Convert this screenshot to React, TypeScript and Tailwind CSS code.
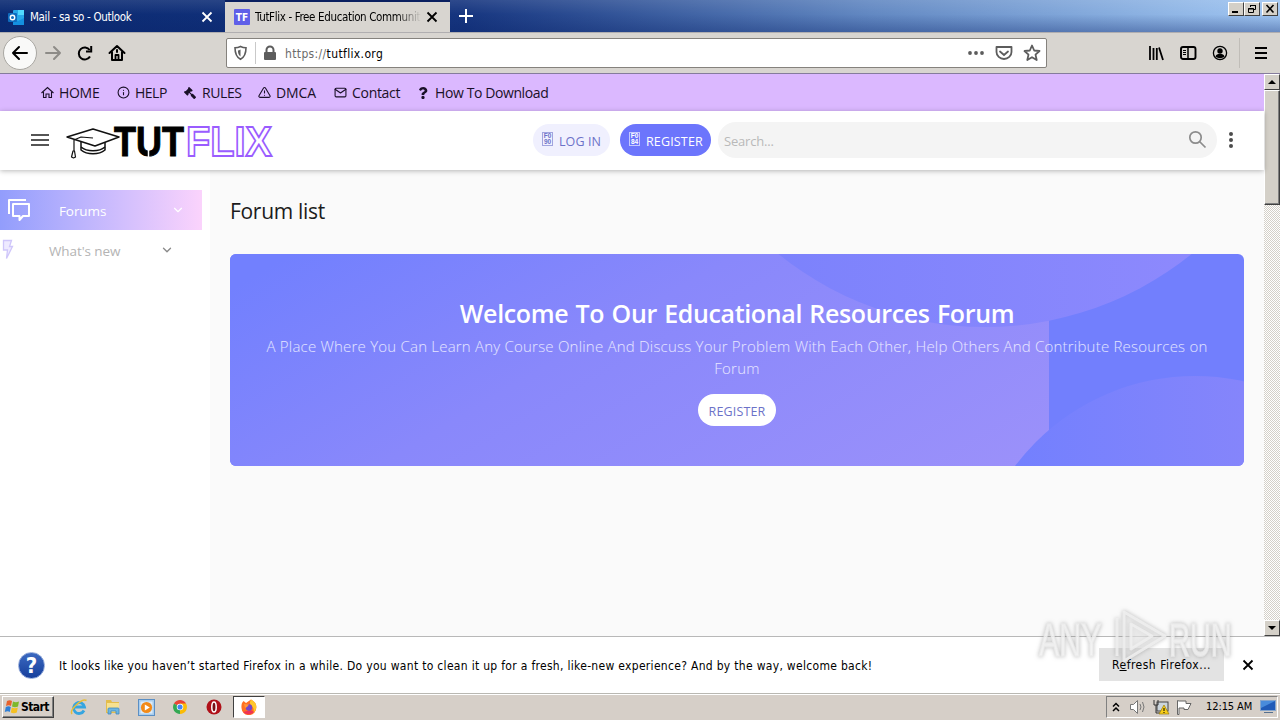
import React from 'react';
import {
  FiAlertTriangle,
  FiChevronDown,
  FiHome,
  FiInfo,
  FiMail,
} from 'react-icons/fi';
import { FaGavel, FaQuestion } from 'react-icons/fa';

interface NavItem {
  label: string;
  icon: React.ReactNode;
  className: string;
  textClassName: string;
}

const HomeIcon = () => (
  <svg width="13" height="13" fill="none" stroke="currentColor" strokeWidth="1.100">
    <path d="M.5 7L6.500 1.500 12.500 7M2.500 6v5.500h2.500V8h3v3.500h2.500V6" />
  </svg>
);

const NAV_ITEMS: NavItem[] = [
  { label: 'HOME', icon: <HomeIcon />, className: 'w-[76px]', textClassName: 'tracking-[-0.3px]' },
  { label: 'HELP', icon: <FiInfo size={13} />, className: 'w-[67px]', textClassName: 'tracking-[-0.5px]' },
  { label: 'RULES', icon: <FaGavel size={12} className="-scale-x-100" />, className: 'w-[74px]', textClassName: 'tracking-[-0.4px]' },
  { label: 'DMCA', icon: <FiAlertTriangle size={13} />, className: 'w-[76px]', textClassName: 'tracking-[-0.1px]' },
  { label: 'Contact', icon: <FiMail size={13} />, className: 'w-[83px]', textClassName: 'tracking-[-0.3px]' },
  { label: 'How To Download', icon: <FaQuestion size={12} />, className: 'w-[140px]', textClassName: 'tracking-[-0.4px]' },
];

/* ---------- Browser chrome ---------- */

const CloseX: React.FC<{ className?: string }> = ({ className = '' }) => (
  <svg className={className} width="12" height="12" viewBox="0 0 12 12" fill="none" stroke="currentColor" strokeWidth="1.8">
    <path d="M1.5 1.5l9 9M10.5 1.5l-9 9" />
  </svg>
);

const OutlookIcon = () => (
  <svg width="17" height="17" viewBox="0 0 17 17" className="shrink-0">
    <rect x="5" y="1" width="11" height="15" rx="1" fill="#28a8ea" />
    <rect x="10" y="1" width="6" height="5" fill="#50d9ff" />
    <path d="M5 9l5 3 6-3v7H5z" fill="#1490df" />
    <rect x="0" y="4" width="9" height="9" rx="1" fill="#0f6cbd" />
    <circle cx="4.5" cy="8.5" r="2.2" fill="none" stroke="#fff" strokeWidth="1.4" />
  </svg>
);

const WindowButton: React.FC<{ children: React.ReactNode; className?: string }> = ({ children, className = '' }) => (
  <div
    className={`flex w-4 items-center justify-center border border-t-white border-l-white border-r-[#404040] border-b-[#404040] bg-[#d4d0c8] ${className}`}
  >
    {children}
  </div>
);

const TabBar = () => (
  <div className="flex h-8 shrink-0 bg-[linear-gradient(180deg,rgba(255,255,255,0.1),rgba(0,0,0,0)_45%,rgba(10,36,106,0.36)),linear-gradient(90deg,#0a2a72_0%,#16357f_36%,#6288c2_68%,#a0c6f2_100%)]">
    <div className="flex w-[225px] items-center pt-[2px] pl-2 text-white">
      <OutlookIcon />
      <span className="mt-px ml-[5px] w-[171px] whitespace-nowrap text-[11.5px] tracking-[-0.33px]">Mail - sa so - Outlook</span>
      <CloseX />
    </div>
    <div className="flex w-[225px] items-center border-t-2 border-[#0a2060] bg-[#d8d5d0] pl-[9px] text-black">
      <div className="flex size-4 shrink-0 items-center justify-center rounded-[1px] bg-[#5f5fe8] text-[10px] font-bold text-white">TF</div>
      <div className="mt-px ml-[5px] w-[166px] overflow-hidden whitespace-nowrap bg-gradient-to-r from-black from-85% to-transparent bg-clip-text text-[11.5px] tracking-[-0.36px] text-transparent">
        TutFlix - Free Education Community
      </div>
      <CloseX className="ml-[5px]" />
    </div>
    <svg className="mt-[9px] ml-[9px]" width="14" height="14" stroke="#fff" strokeWidth="2">
      <path d="M7 0v14M0 7h14" />
    </svg>
    <div className="mt-[2px] mr-[2px] ml-auto flex">
      <WindowButton className="h-[14px]">
        <svg width="10" height="10"><path d="M1 7h6v2H1z" /></svg>
      </WindowButton>
      <WindowButton className="h-[14px]">
        <svg width="10" height="10" fill="none" stroke="#000">
          <path d="M3.5 3V1.5h5v4H7M3 1.5h6M1.500 4.500h5v4h-5zM1 5h6" />
        </svg>
      </WindowButton>
      <WindowButton className="ml-[2px] h-[14px]">
        <svg width="10" height="10" stroke="#000" strokeWidth="1.6"><path d="M1.500 1l7 7.500M8.500 1l-7 7.500" /></svg>
      </WindowButton>
    </div>
  </div>
);

const Toolbar = () => (
  <div className="flex h-[42px] shrink-0 items-center border-t border-b border-t-[#b0aeb0] border-b-[#857c9c] bg-[#d8d5d0] pl-[3px]">
    <div className="flex size-[34px] items-center justify-center rounded-full border border-[#a9a7a2] bg-[#f9f9f8]">
      <svg width="18" height="16" fill="none" stroke="#000" strokeWidth="2" strokeLinecap="round" strokeLinejoin="round">
        <path d="M2 8h14M8 2L2 8l6 6" />
      </svg>
    </div>
    <svg className="ml-[7px]" width="18" height="16" fill="none" stroke="#8d8b87" strokeWidth="2" strokeLinecap="round" strokeLinejoin="round">
      <path d="M2 8h14M10 2l6 6-6 6" />
    </svg>
    <svg className="ml-[14px]" width="18" height="18" fill="none" stroke="#000" strokeWidth="2">
      <path d="M14 12.500a6 6 0 1 1-.3-6.500" />
      <path d="M15.200 2v5.500H10" />
    </svg>
    <svg className="ml-[14px]" width="18" height="18" fill="none" stroke="#000" strokeWidth="2" strokeLinejoin="round" strokeLinecap="round">
      <path d="M1.500 9L9 2l7.500 7M4 8v8h10V8" />
      <path d="M7.500 16v-5h3v5" strokeWidth="1.800" />
      <path d="M9 6v2" />
    </svg>
    <div className="ml-[100px] flex h-[30px] w-[821px] items-center rounded-[2px] border border-[#85827d] bg-white">
      <svg className="ml-[6px]" width="15" height="16" fill="none" stroke="#5c5c5c" strokeWidth="1.600">
        <path d="M7.500 1.500c2 1 3.700 1.300 5.500 1.300 0 5.500-1 9.200-5.500 11.500C3 12 2 8.300 2 2.800c1.800 0 3.500-.3 5.500-1.300z" />
        <path d="M7.500 4.500v7c-2-1.500-2.500-3.500-2.600-6 .9-.2 1.700-.4 2.600-1z" fill="#5c5c5c" stroke="none" />
      </svg>
      <div className="ml-[7px] h-[22px] w-px bg-[#c9c9c9]" />
      <svg className="ml-[7px]" width="14" height="16" fill="#5c5c5c">
        <rect x="1" y="7" width="12" height="8" rx="1" />
        <path d="M3.500 7V5a3.500 3.500 0 0 1 7 0v2" fill="none" stroke="#5c5c5c" strokeWidth="2" />
      </svg>
      <span className="mt-[2px] ml-2 w-[682px] whitespace-nowrap text-[12px] tracking-[0.36px] text-[#6b6b6b]">
        https://<span className="text-black">tutflix.org</span>
      </span>
      <svg className="shrink-0" width="18" height="16" fill="#5c5c5c">
        <circle cx="3" cy="8" r="1.900" /><circle cx="9" cy="8" r="1.900" /><circle cx="15" cy="8" r="1.900" />
      </svg>
      <svg className="ml-[10px] shrink-0" width="18" height="16" fill="none" stroke="#5c5c5c" strokeWidth="1.800">
        <path d="M1.500 2h15v5a7.500 7 0 0 1-15 0z" strokeLinejoin="round" />
        <path d="M5 6.500L9 10l4-3.500" strokeLinecap="round" />
      </svg>
      <svg className="ml-[10px] shrink-0" width="18" height="18" fill="none" stroke="#5c5c5c" strokeWidth="1.800" strokeLinejoin="round">
        <path d="M9 1.500l2.200 5 5.300.5-4 3.600 1.200 5.400L9 13.200 4.300 16l1.200-5.400-4-3.600 5.300-.5z" />
      </svg>
    </div>
    <div className="ml-auto flex items-center">
      <svg width="17" height="16" stroke="#000" strokeWidth="1.800">
        <path d="M2 1v14M5.500 3v12M8.800 3v12M11 2.500l4 12.500" />
      </svg>
      <svg className="ml-[15px]" width="17" height="16" fill="none" stroke="#000" strokeWidth="1.900">
        <rect x="1" y="2" width="14.500" height="12" rx="2" />
        <path d="M8 2v12" strokeWidth="1.500" />
        <path d="M3 5.500h3M3 7.500h3M3 9.500h3" strokeWidth="1" />
      </svg>
      <svg className="ml-[15px]" width="16" height="16">
        <circle cx="8" cy="8" r="6.600" fill="none" stroke="#000" strokeWidth="1.300" />
        <circle cx="8" cy="6" r="2.700" />
        <path d="M3.500 11.500c.5-2 2-2.500 4.500-2.500s4 .5 4.500 2.500c-2.500 2.200-6.500 2.200-9 0z" />
      </svg>
      <div className="ml-[11px] h-[30px] w-px bg-[#c0bdb8]" />
      <svg className="mr-[13px] ml-[15px]" width="12" height="14" stroke="#000" strokeWidth="2">
        <path d="M0 2h12M0 7h12M0 12h12" />
      </svg>
    </div>
  </div>
);

/* ---------- Page header ---------- */

const TopNav = () => (
  <nav className="flex h-[37px] shrink-0 items-center bg-[#dbb8ff] pl-[41px] text-[14px] text-[#1a1028]">
    {NAV_ITEMS.map((item) => (
      <a key={item.label} className={`flex items-center whitespace-nowrap ${item.className}`}>
        <span className="w-[18px]">{item.icon}</span>
        <span className={item.textClassName}>{item.label}</span>
      </a>
    ))}
  </nav>
);

const Logo = () => (
  <svg width="208" height="40" viewBox="0 0 208 40" className="ml-[17px] shrink-0 overflow-visible">
    <g fill="#fff" stroke="#111" strokeWidth="1.500" strokeLinejoin="round">
      <path d="M15 18v12c6 5 18 5 24 0V18" />
      <path d="M15 27c6 5 18 5 24 0" fill="none" />
      <path d="M1 17L27 9l26 8-24 9z" />
      <path d="M27 18l-12-1-7 3v12" fill="none" strokeWidth="1.200" />
      <path d="M7 31l-1.500 6 2 1 2-1L8.500 31z" strokeWidth="1.200" />
    </g>
    <text x="48" y="35.500" textLength="70" lengthAdjust="spacingAndGlyphs" fontFamily="Liberation Sans" fontWeight="700" fontSize="43" fill="#000" stroke="#000" strokeWidth="1">TUT</text>
    <path d="M82.500 27v11" stroke="#fff" strokeWidth="1.500" />
    <text x="120" y="35.500" textLength="86" lengthAdjust="spacingAndGlyphs" fontFamily="Liberation Sans" fontWeight="700" fontSize="43" fill="#fff" stroke="#9a5cff" strokeWidth="1.800">FLIX</text>
  </svg>
);

// Missing-font box showing the code point of the glyph
const CodeBox: React.FC<{ low: string }> = ({ low }) => (
  <span className="-mt-[2px] flex h-[14px] w-[11px] shrink-0 flex-col items-center justify-center border border-current/60 font-['Liberation_Sans'] text-[6.500px] leading-[6px] font-bold">
    <span>F0</span>
    <span>{low}</span>
  </span>
);

const SiteHeader = () => (
  <header className="relative flex h-[59px] shrink-0 items-center bg-white pb-[2px] pl-[31px] shadow-[0_1px_5px_rgba(0,0,0,0.28)]">
    <svg width="18" height="14" stroke="#555" strokeWidth="2" className="shrink-0">
      <path d="M0 2h18M0 7h18M0 12h18" />
    </svg>
    <Logo />
    <a className="ml-[259px] flex h-8 w-[77px] items-center rounded-full bg-[#f0f0fe] pl-[9px] text-[12.5px] whitespace-nowrap text-[#6c72c8]">
      <CodeBox low="90" />
      <span className="mt-[5px] ml-[6px] tracking-[0.1px]">LOG IN</span>
    </a>
    <a className="ml-[10px] flex h-8 w-[91px] items-center rounded-full bg-[#6c75fc] pl-[9px] text-[12.5px] whitespace-nowrap text-white">
      <CodeBox low="84" />
      <span className="mt-[5px] ml-[6px] tracking-[0.15px]">REGISTER</span>
    </a>
    <div className="ml-[7px] flex h-9 w-[499px] items-center rounded-full bg-[#f4f4f4] pr-[10px] pl-[6px]">
      <span className="mt-[5px] text-[13px] tracking-[-0.2px] text-[#b9b9b9]">Search...</span>
      <svg className="ml-auto" width="19" height="19" fill="none" stroke="#8c8c8c" strokeWidth="1.700">
        <circle cx="7.500" cy="7.500" r="5.700" />
        <path d="M11.500 11.500l6 6" />
      </svg>
    </div>
    <svg className="ml-[11px]" width="6" height="18" fill="#4c4c4c">
      <circle cx="3" cy="3" r="2" /><circle cx="3" cy="9" r="2" /><circle cx="3" cy="15" r="2" />
    </svg>
  </header>
);

/* ---------- Page body ---------- */

const Sidebar = () => (
  <aside className="w-[210px] shrink-0 bg-white pt-5 text-[13.500px]">
    <div className="flex h-10 w-[202px] items-center bg-gradient-to-r from-[#929dfc] to-[#fbd3fc] pl-2 text-white">
      <svg width="23" height="23" fill="none" stroke="#fff" strokeWidth="2" strokeLinejoin="round">
        <path d="M1 15V1h17" />
        <path d="M5 5h16v12h-6l-3.500 4v-4H5z" />
      </svg>
      <span className="mt-[2px] ml-7 w-[112px] tracking-[-0.1px]">Forums</span>
      <FiChevronDown size={14} strokeWidth={2} />
    </div>
    <div className="flex h-10 w-[202px] items-center pl-[2px] text-[#b4b4b4]">
      <svg width="12" height="22" fill="#eeeaff" stroke="#cfc6fa" strokeWidth="1.300">
        <path d="M1.500 1.500h8l-2 6h3l-6 12 1-8.500h-4z" />
      </svg>
      <span className="mt-[2px] ml-[35px] w-[111px] tracking-[-0.1px]">What&apos;s new</span>
      <FiChevronDown size={14} strokeWidth={2.300} className="text-[#8a8a8a]" />
    </div>
  </aside>
);

const BannerShapes = () => (
  <svg className="absolute inset-0" width="1014" height="212" viewBox="0 0 1014 212">
    <defs>
      <linearGradient id="panel" gradientUnits="userSpaceOnUse" x1="60" y1="0" x2="390" y2="560">
        <stop offset="0" stopColor="#7280fe" />
        <stop offset="0.35" stopColor="#8988fb" />
        <stop offset="1" stopColor="#a093fa" />
      </linearGradient>
      <linearGradient id="topCircle" gradientUnits="userSpaceOnUse" x1="548" y1="0" x2="962" y2="0">
        <stop offset="0" stopColor="#7c82fc" />
        <stop offset="1" stopColor="#8d89fd" />
      </linearGradient>
      <linearGradient id="bottomCircle" gradientUnits="userSpaceOnUse" x1="785" y1="0" x2="1014" y2="0">
        <stop offset="0" stopColor="#7380fe" />
        <stop offset="1" stopColor="#8585fb" />
      </linearGradient>
    </defs>
    <rect width="1014" height="212" fill="#727ffd" />
    <rect width="819" height="212" fill="url(#panel)" />
    <circle cx="755" cy="-256" r="329" fill="url(#topCircle)" />
    <circle cx="965" cy="347" r="225" fill="url(#bottomCircle)" />
  </svg>
);

const WelcomeBanner = () => (
  <section className="relative h-[212px] w-[1014px] overflow-hidden rounded-md text-center text-white">
    <BannerShapes />
    <div className="relative flex flex-col items-center pt-[41px]">
      <h2 className="text-[25px] leading-9 font-semibold tracking-[-0.36px] whitespace-nowrap [word-spacing:1.2px]">Welcome To Our Educational Resources Forum</h2>
      <p className="mt-[4px] text-[15px] leading-[22px] font-light tracking-[0.21px] whitespace-nowrap text-white/80">
        A Place Where You Can Learn Any Course Online And Discuss Your Problem With Each Other, Help Others And Contribute Resources on
        <br />
        Forum
      </p>
      <a className="mt-[15px] flex h-8 w-[78px] items-center justify-center rounded-full bg-white pt-[4px] text-[12.5px] tracking-[0.15px] text-[#6c72c8]">
        REGISTER
      </a>
    </div>
  </section>
);

const Scrollbar = () => (
  <div className="flex w-4 shrink-0 flex-col bg-[repeating-conic-gradient(#fff_0_25%,#d4d0c8_0_50%)] bg-[length:2px_2px]">
    <WindowButton className="h-4">
      <svg width="8" height="4"><path d="M4 0l4 4H0z" /></svg>
    </WindowButton>
    <div className="h-[115px] border border-t-white border-l-white border-r-[#404040] border-b-[#404040] bg-[#d4d0c8] shadow-[inset_-1px_-1px_0_#808080]" />
    <WindowButton className="mt-auto h-4">
      <svg width="8" height="4"><path d="M4 4l4-4H0z" /></svg>
    </WindowButton>
  </div>
);

/* ---------- Notification + taskbar ---------- */

const Notification = () => (
  <div className="flex h-[57px] shrink-0 items-center border-t border-[#b8b8b8] bg-white pl-[18px] text-black">
    <div className="flex size-[27px] shrink-0 items-center justify-center rounded-full border border-[#8ea6d8] bg-gradient-to-b from-[#3c69c0] to-[#173f9c] text-[22px] font-bold text-white">?</div>
    <span className="mt-px ml-[14px] w-[1040px] text-[12px] tracking-[0.305px] whitespace-nowrap">
      It looks like you haven’t started Firefox in a while. Do you want to clean it up for a fresh, like-new experience? And by the way, welcome back!
    </span>
    <div className="-mt-px flex h-[33px] w-[125px] shrink-0 items-center justify-center bg-[#e3e3e3] text-[12px] tracking-[0.5px] whitespace-nowrap">
      <span>R<u>e</u>fresh Firefox...</span>
    </div>
    <CloseX className="ml-[18px] shrink-0" />
  </div>
);

const StartFlag = () => (
  <svg width="16" height="16" viewBox="0 0 16 16">
    <path d="M3 2c2-1 3.500-1 5 0L7 7C5.500 6 4 6 2 7z" fill="#e8622c" />
    <path d="M9 2.500c2 1 3.500 1 6 0L14 7.500c-2 1-4 1-6 0z" fill="#7db82c" />
    <path d="M1.800 8c2-1 3.500-1 5 0l-1 5C4.500 12 3 12 .8 13z" fill="#2f7fd6" />
    <path d="M7.800 8.500c2 1 4 1 6 0l-1 5c-2 1-4 1-6 0z" fill="#f5c022" />
  </svg>
);

const IeIcon = () => (
  <svg width="18" height="18" viewBox="0 0 18 18" fill="none">
    <path d="M14 12.500A5.500 5.500 0 1 1 14.500 9H5" stroke="#35a5e0" strokeWidth="2.800" />
    <path d="M2 16C-1 12 12 0 16.500 2.500" stroke="#e8bd38" strokeWidth="1.500" />
  </svg>
);

const ExplorerIcon = () => (
  <svg width="18" height="18" viewBox="0 0 18 18">
    <path d="M2 2h5l1 2h7v11H2z" fill="#e3bd4c" />
    <path d="M3 5h12v9H3z" fill="#f6e190" />
    <path d="M4 16v-5q0-1 1-1h9q1 0 1 1v5h-3v-3H7v3z" fill="#6cb6e2" stroke="#4189bd" strokeWidth="0.800" />
  </svg>
);

const MediaIcon = () => (
  <svg width="17" height="17" viewBox="0 0 17 17">
    <rect x="0.500" y="0.500" width="16" height="16" fill="#a8cdee" stroke="#5b8fc4" />
    <rect x="2.500" y="2.500" width="12" height="12" fill="#dcebf8" />
    <circle cx="8.500" cy="8.500" r="5.600" fill="#f28a18" />
    <path d="M6.800 5.500l5 3-5 3z" fill="#fff" />
  </svg>
);

const ChromeIcon = () => (
  <svg width="14" height="14" viewBox="0 0 16 16">
    <path d="M8 8L1.100 4A8 8 0 0 1 14.900 4z" fill="#ea4335" />
    <path d="M8 4h6.900A8 8 0 0 1 8 16z" fill="#fbbc05" />
    <path d="M8 8v8A8 8 0 0 1 1.100 4z" fill="#34a853" />
    <circle cx="8" cy="8" r="3.700" fill="#fff" />
    <circle cx="8" cy="8" r="2.900" fill="#4285f4" />
  </svg>
);

const OperaIcon = () => (
  <svg width="16" height="16" viewBox="0 0 16 16">
    <circle cx="8" cy="8" r="7.500" fill="#b01018" />
    <ellipse cx="8" cy="8" rx="2.200" ry="5" fill="#781014" stroke="#fff" strokeWidth="1.500" />
  </svg>
);

const FirefoxIcon = () => (
  <svg width="16" height="16" viewBox="0 0 16 16">
    <path d="M1 4l1.500-2L5 4l5-3.500c4 2 5.500 5 5.300 8A7.400 7.400 0 0 1 .5 9C.3 7 .5 5.500 1 4z" fill="#ff7023" />
    <path d="M10 .5c4 2 5.500 5 5.300 8a7.400 7.400 0 0 1-3 5.500c1.500-4-1-7-2.800-8.500C8.500 4 9 2 10 .5z" fill="#ffc82d" />
    <path d="M2 13a7.400 7.400 0 0 0 11 0l-3-2z" fill="#f03355" />
    <circle cx="8" cy="8.500" r="3.200" fill="#7447c9" />
    <path d="M3 5l5 .5-2 2.500-2 1z" fill="#ff9638" />
  </svg>
);

const Taskbar = () => (
  <div className="flex h-[27px] shrink-0 items-center border-t border-[#b9b8b2] bg-[#d6cfc8] pl-[2px] text-black shadow-[inset_0_1px_0_#fff]">
    <div className="flex h-[22px] w-[52px] items-center border border-t-white border-l-white border-r-[#404040] border-b-[#404040] pl-px text-[12px] font-bold tracking-[-0.6px] shadow-[inset_-1px_-1px_0_#808080]">
      <StartFlag />
      <span className="ml-px">Start</span>
    </div>
    <div className="ml-4 flex items-center">
      <IeIcon />
      <span className="ml-4"><ExplorerIcon /></span>
      <span className="ml-4"><MediaIcon /></span>
      <span className="ml-[18px]"><ChromeIcon /></span>
      <span className="ml-[19px]"><OperaIcon /></span>
      <div className="ml-[11px] flex h-[22px] w-8 items-center justify-center border border-t-[#404040] border-l-[#404040] border-r-white border-b-white bg-white">
        <FirefoxIcon />
      </div>
    </div>
    <div className="mr-[2px] ml-auto flex h-[22px] w-[172px] items-center border border-t-[#808080] border-l-[#808080] border-r-white border-b-white pl-[5px]">
      <svg width="8" height="10" fill="none" stroke="#000" strokeWidth="1.500">
        <path d="M1 4.500l3-3 3 3M1 9l3-3 3 3" />
      </svg>
      <svg className="ml-[9px]" width="18" height="16" fill="#fff" stroke="#777">
        <path d="M1.500 5.500h3l4-4v13l-4-4h-3z" />
        <path d="M11 5q2 3 0 6M13.500 3q3 5 0 10" fill="none" />
      </svg>
      <svg className="ml-[6px]" width="17" height="16">
        <rect x="4" y="3" width="11" height="9" fill="#ccd5dc" stroke="#444" />
        <path d="M1 1v5h4V1M3 6v8h5" fill="none" stroke="#333" />
        <path d="M11 6l5 9H6z" fill="#f8ce19" stroke="#9b7b08" strokeWidth="0.700" />
        <path d="M11 9v3M11 13v1" stroke="#000" />
      </svg>
      <svg className="ml-[6px]" width="17" height="16" fill="#fff" stroke="#666">
        <path d="M1.500 1.500v14h1.500V9h5v1.500h4l3-6h-5V2h-7z" />
      </svg>
      <span className="mt-px ml-[13px] w-[48px] text-[11px] tracking-[-0.1px] whitespace-nowrap">12:15 AM</span>
      <svg className="ml-[6px] shrink-0" width="16" height="14">
        <rect x="0.500" y="0.500" width="15" height="10" fill="#215bb8" stroke="#86a5cc" />
        <path d="M1 1h14L1 8z" fill="#498bdb" />
        <path d="M4 12.500h9" stroke="#56708f" />
      </svg>
    </div>
  </div>
);

const Watermark = () => (
  <div className="pointer-events-none absolute top-[608px] left-[1039px] flex h-[58px] w-[194px] items-center justify-between text-[46px] leading-none text-white/70 drop-shadow-[0_0_2px_rgba(110,110,110,0.55)] [-webkit-text-stroke:2px_rgba(235,235,235,0.75)]">
    <span className="w-[68px] origin-left scale-x-[0.66] pt-[6px] font-['Liberation_Sans']">ANY</span>
    <svg className="shrink-0" width="58" height="56" fill="rgba(255,255,255,0.3)" stroke="rgba(240,240,240,0.85)" strokeWidth="3" strokeLinejoin="round">
      <path d="M15 3l41 24-41 25z" />
      <path d="M22 15l21 12-21 13z" />
      <path d="M8 9v38" />
    </svg>
    <span className="w-[64px] origin-left scale-x-[0.63] pt-[6px] font-['Liberation_Sans']">RUN</span>
  </div>
);

const App: React.FC = () => (
  <div className="relative flex h-[720px] w-[1280px] flex-col overflow-hidden bg-white font-['DejaVu_Sans_Condensed','Noto_Sans',sans-serif]">
    <TabBar />
    <Toolbar />
    <div className="flex h-[562px] shrink-0 font-['Open_Sans','Noto_Sans',sans-serif]">
      <div className="flex w-[1264px] flex-col bg-[#fafafa]">
        <TopNav />
        <SiteHeader />
        <div className="flex min-h-0 flex-1">
          <Sidebar />
          <main className="pt-[23px] pl-5">
            <h1 className="mb-[25px] text-[21px] leading-9 tracking-[-0.3px] text-[#1c1c1c]">Forum list</h1>
            <WelcomeBanner />
          </main>
        </div>
      </div>
      <Scrollbar />
    </div>
    <Notification />
    <Taskbar />
    <Watermark />
  </div>
);

export default App;
